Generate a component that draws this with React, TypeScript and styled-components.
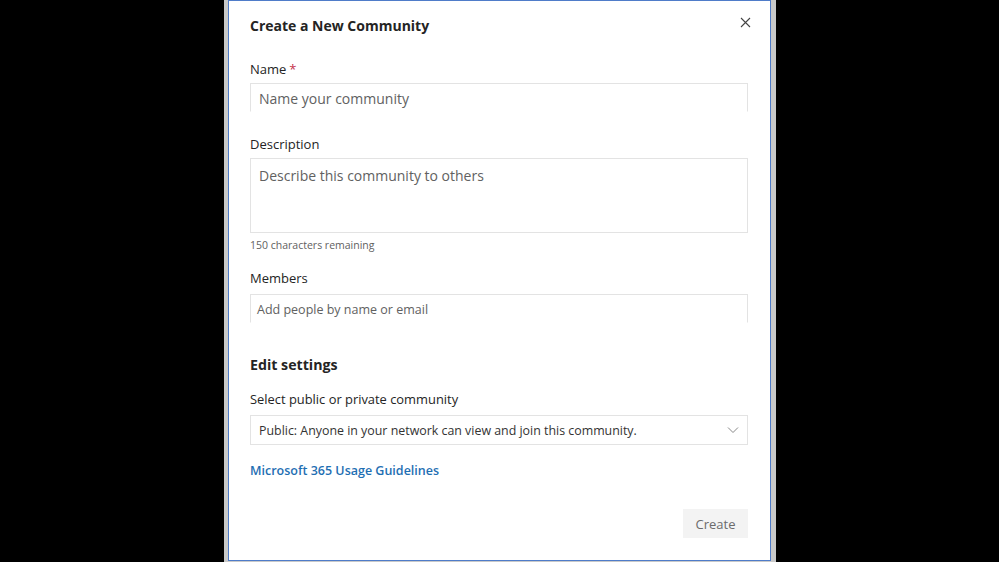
import React from "react";
import styled, { createGlobalStyle } from "styled-components";

const Global = createGlobalStyle`
  html, body { margin: 0; padding: 0; background: #000; }
  body { font-family: "Open Sans", "Noto Sans", "Liberation Sans", sans-serif; }
  * { box-sizing: border-box; }
`;

const Page = styled.div`
  width: 999px;
  height: 562px;
  background: #000;
  display: flex;
  justify-content: center;
  overflow: hidden;
`;

const Backdrop = styled.div`
  width: 552px;
  height: 562px;
  margin-left: 1px;
  background: #c9c9c9;
  padding: 0 5px 0 4px;
`;

const Dialog = styled.div`
  width: 543px;
  height: 561px;
  background: #fff;
  border: 1px solid #4f7cc9;
  padding: 15px 22px 0 21px;
  display: flex;
  flex-direction: column;
  color: #242424;
`;

const Header = styled.div`
  display: flex;
  justify-content: space-between;
  align-items: flex-start;
`;

const Title = styled.h1`
  margin: 0;
  font-size: 14px;
  line-height: 20px;
  font-weight: 700;
  color: #242424;
`;

const Close = styled.button`
  border: none;
  background: none;
  padding: 0;
  margin: 1px -3px 0 0;
  width: 11px;
  height: 11px;
  display: flex;
  color: #444;
`;

const Label = styled.div<{ $top: number }>`
  margin-top: ${(p) => p.$top}px;
  font-size: 13px;
  line-height: 18px;
  font-weight: 500;
  color: #242424;
`;

const Required = styled.span`
  color: #c4314b;
  margin-left: 3px;
`;

const Field = styled.div<{ $top: number; $height: number; $closed?: boolean; $size?: number; $pad?: number }>`
  margin-top: ${(p) => p.$top}px;
  height: ${(p) => p.$height}px;
  border: 1px solid #e3e3e3;
  border-bottom-color: ${(p) => (p.$closed ? "#e3e3e3" : "transparent")};
  padding: 0 0 0 ${(p) => p.$pad ?? 8}px;
  font-size: ${(p) => p.$size ?? 14}px;
  color: #616161;
  display: flex;
  align-items: flex-start;
`;

const FieldText = styled.span<{ $offset: number }>`
  margin-top: ${(p) => p.$offset}px;
  line-height: 18px;
`;

const Helper = styled.div`
  margin-top: 5px;
  font-size: 10.5px;
  line-height: 14px;
  color: #616161;
`;

const Section = styled.h2`
  margin: 31px 0 0;
  font-size: 14.2px;
  line-height: 22px;
  font-weight: 700;
  color: #242424;
`;

const SelectLabel = styled(Label)`
  font-size: 12.9px;
`;

const Select = styled.div`
  margin-top: 7px;
  height: 30px;
  border: 1px solid #e3e3e3;
  padding: 0 8px 0 8px;
  display: flex;
  align-items: center;
  justify-content: space-between;
  font-size: 12.4px;
  color: #333;
`;

const Chevron = styled.svg`
  width: 12px;
  height: 8px;
  color: #888;
`;

const Link = styled.a`
  margin-top: 17px;
  font-size: 12.5px;
  line-height: 18px;
  font-weight: 600;
  color: #1f6fb3;
  text-decoration: none;
  align-self: flex-start;
`;

const Footer = styled.div`
  margin-top: 29px;
  display: flex;
  justify-content: flex-end;
`;

const CreateButton = styled.button`
  width: 65px;
  height: 29px;
  border: none;
  background: #f3f3f3;
  color: #6b6b6b;
  font-family: inherit;
  font-size: 13px;
  padding: 0;
`;

export default function App() {
  return (
    <>
      <Global />
      <Page>
        <Backdrop>
          <Dialog>
            <Header>
              <Title>Create a New Community</Title>
              <Close aria-label="Close">
                <svg viewBox="0 0 11 11" width="11" height="11">
                  <path d="M1 1 L10 10 M10 1 L1 10" stroke="currentColor" strokeWidth="1.1" fill="none" />
                </svg>
              </Close>
            </Header>
            <Label $top={24}>
              Name<Required>*</Required>
            </Label>
            <Field $top={5} $height={29} $size={14}>
              <FieldText $offset={6}>Name your community</FieldText>
            </Field>
            <Label $top={23}>Description</Label>
            <Field $top={5} $height={75} $closed $size={14}>
              <FieldText $offset={8}>Describe this community to others</FieldText>
            </Field>
            <Helper>150 characters remaining</Helper>
            <Label $top={17}>Members</Label>
            <Field $top={7} $height={29} $size={12.5} $pad={6}>
              <FieldText $offset={6}>Add people by name or email</FieldText>
            </Field>
            <Section>Edit settings</Section>
            <SelectLabel $top={14}>Select public or private community</SelectLabel>
            <Select>
              <span>Public: Anyone in your network can view and join this community.</span>
              <Chevron viewBox="0 0 12 8">
                <path d="M1 1.5 L6 6.5 L11 1.5" stroke="currentColor" strokeWidth="1" fill="none" />
              </Chevron>
            </Select>
            <Link href="#">Microsoft 365 Usage Guidelines</Link>
            <Footer>
              <CreateButton>Create</CreateButton>
            </Footer>
          </Dialog>
        </Backdrop>
      </Page>
    </>
  );
}
